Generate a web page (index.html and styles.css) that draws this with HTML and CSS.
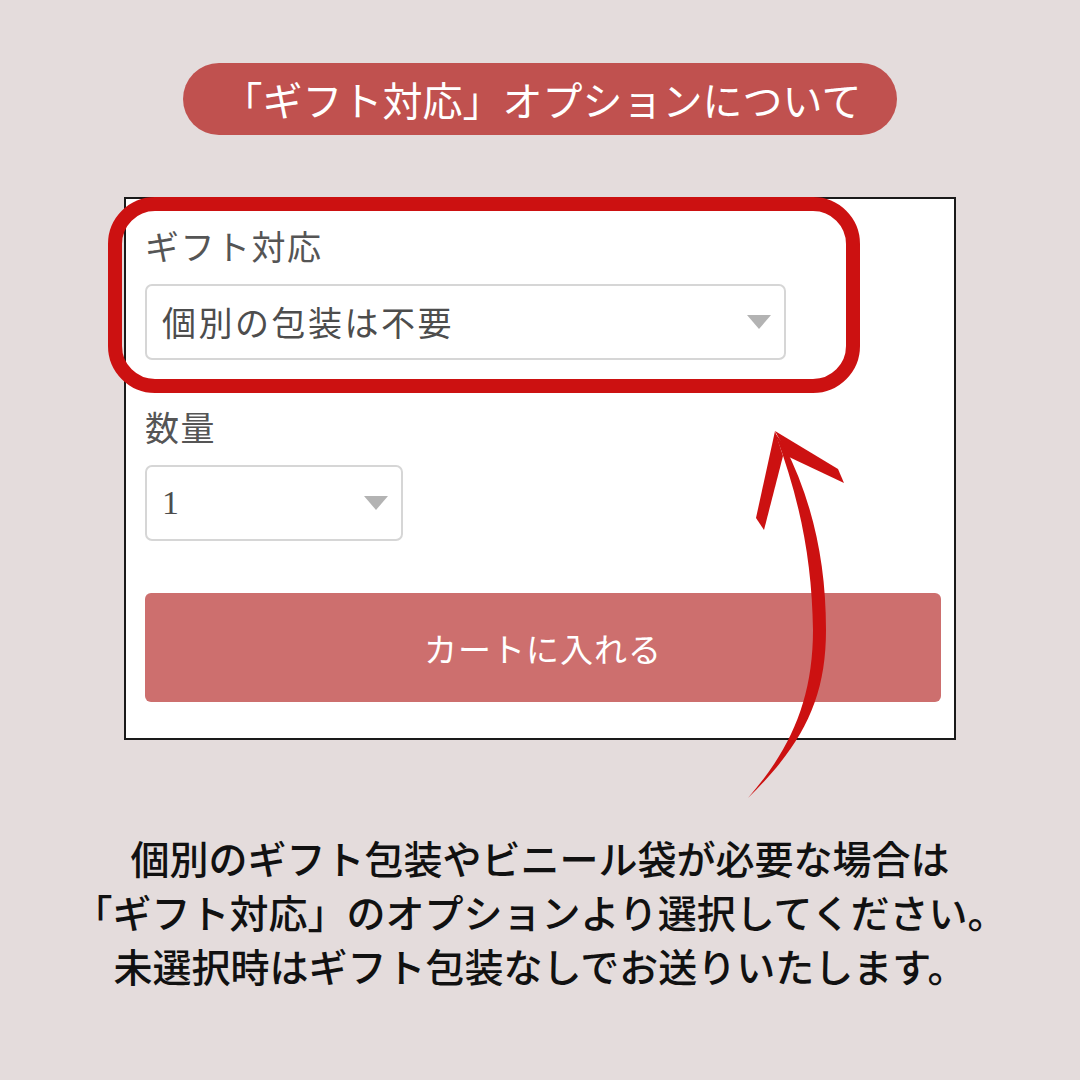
FILE: index.html
```html
<!DOCTYPE html>
<html lang="ja">
<head>
  <meta charset="UTF-8">
  <meta name="viewport" content="width=device-width, initial-scale=1.0">
  <title>ギフト対応オプションについて</title>
  <link rel="stylesheet" href="styles.css">
</head>
<body>
  <div class="page">
    <h1 class="title">「ギフト対応」オプションについて</h1>

    <div class="card">
      <p class="label label-gift">ギフト対応</p>
      <div class="select select-gift">
        <span>個別の包装は不要</span>
        <i class="caret"></i>
      </div>

      <p class="label label-qty">数量</p>
      <div class="select select-qty">
        <span>1</span>
        <i class="caret"></i>
      </div>

      <button class="cart">カートに入れる</button>
    </div>

    <p class="note">
      個別のギフト包装やビニール袋が必要な場合は<br>
      「ギフト対応」のオプションより選択してください。<br>
      未選択時はギフト包装なしでお送りいたします。
    </p>

    <svg class="marks" width="1080" height="1080" viewBox="0 0 1080 1080">
      <rect x="115" y="204" width="738" height="182" rx="40" fill="none" stroke="#cc1111" stroke-width="14"/>
      <!-- shaft -->
      <path d="M775 433 C800 500 812 560 813 630 C813 700 790 750 748 798 C802 745 826 700 826 630 C826 560 812 500 784 445 Z" fill="#cc1111"/>
      <!-- head -->
      <path d="M775 431 L838 469 L844 483 L789 457 Z" fill="#cc1111"/>
      <path d="M775 431 L783 456 L764 530 L756 518 Z" fill="#cc1111"/>
    </svg>
  </div>
</body>
</html>
```

FILE: styles.css
```css
* {
  box-sizing: border-box;
  font-family: "Noto Sans CJK JP", "Noto Sans", sans-serif;
}

body {
  margin: 0;
  background-color: #e4dcdc;
}

.page {
  position: relative;
  width: 1080px;
  height: 1080px;
  padding-top: 63px;
  display: flex;
  flex-direction: column;
  align-items: center;
}

.title {
  margin: 0;
  width: 714px;
  height: 72px;
  border-radius: 36px;
  background-color: #c0514f;
  color: white;
  font-size: 40px;
  font-weight: 400;
  line-height: 72px;
  text-align: center;
  padding-left: 4px;
}

.card {
  margin-top: 62px;
  align-self: flex-start;
  margin-left: 124px;
  width: 832px;
  height: 543px;
  background-color: white;
  border: 2px solid #1a1a1a;
  padding: 27px 13px 0 19px;
  display: flex;
  flex-direction: column;
  align-items: flex-start;
}

.label {
  margin: 0;
  color: #555;
  font-size: 34px;
  line-height: 40px;
  letter-spacing: 1.5px;
}

.label-qty {
  margin-top: 47px;
}

.select {
  margin-top: 18px;
  height: 76px;
  border: 2px solid #d6d6d6;
  border-radius: 7px;
  display: flex;
  align-items: center;
  justify-content: space-between;
  padding: 0 13px 0 15px;
  color: #4d4d4d;
  font-size: 34px;
  letter-spacing: 2.5px;

  span {
    line-height: 1;
  }
}

.select-gift {
  width: 641px;
}

.select-qty {
  width: 258px;

  span {
    font-family: "Liberation Serif", serif;
    font-size: 34px;
  }
}

.caret {
  width: 0;
  height: 0;
  border-left: 12px solid transparent;
  border-right: 12px solid transparent;
  border-top: 14px solid #b3b3b3;
}

.cart {
  margin-top: 52px;
  width: 796px;
  height: 109px;
  border: none;
  border-radius: 6px;
  background-color: #cd6f6e;
  color: white;
  font-size: 33px;
  letter-spacing: 1px;
  padding: 0;
}

.note {
  margin: 90px 0 0;
  color: #111;
  font-size: 39px;
  font-weight: 500;
  line-height: 54px;
  text-align: center;
}

.marks {
  position: absolute;
  top: 0;
  left: 0;
  pointer-events: none;
}
```
